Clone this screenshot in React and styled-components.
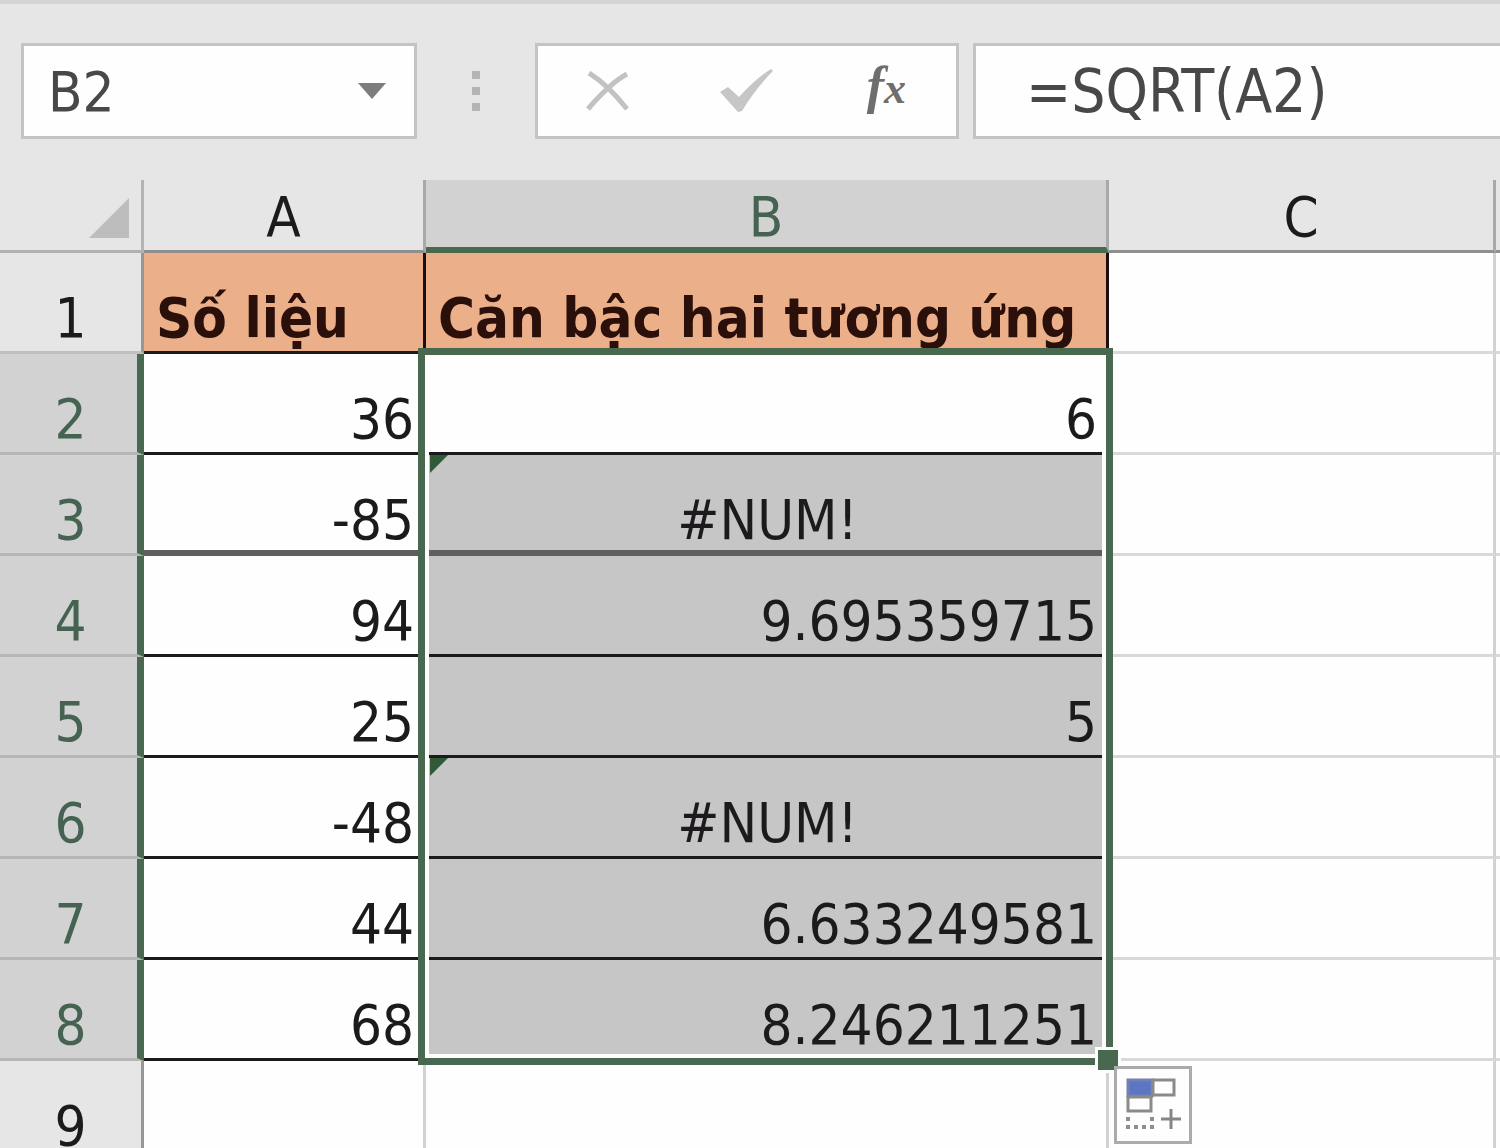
import React, { useState } from "react";
import styled, { createGlobalStyle } from "styled-components";

const GlobalStyle = createGlobalStyle`
  *, *::before, *::after { box-sizing: border-box; }
  body { margin: 0; }
  button, input { font: inherit; color: inherit; }
`;

const green = "#48684f";
const chrome = "#e6e6e6";

const Workbook = styled.main`
  display: flex;
  flex-direction: column;
  height: 100vh;
  overflow: hidden;
  background: #fefefe;
  color: #1c1a1c;
  font-family: "DejaVu Sans Condensed", "Noto Sans", sans-serif;
  font-size: 56px;
  line-height: 66px;
`;

const FormulaBar = styled.header`
  display: flex;
  align-items: stretch;
  flex: none;
  padding: 39px 0 41px 21px;
  border-top: 4px solid #d4d4d4;
  background: ${chrome};
  color: #484848;
`;

const Box = styled.div`
  display: flex;
  align-items: center;
  height: 96px;
  width: ${(p) => p.$width || "auto"};
  flex: ${(p) => (p.$grow ? "1" : "none")};
  min-width: 0;
  border: 3px solid #c4c4c4;
  border-right-width: ${(p) => (p.$grow ? "0" : "3px")};
  background: #fefefe;
`;

const Field = styled.input`
  flex: 1;
  min-width: 0;
  height: 72px;
  padding: 0 0 0 ${(p) => p.$indent};
  border: 0;
  outline: 0;
  background: transparent;
`;

const FormulaField = styled(Field)`
  font-size: 60px;
`;

const IconButton = styled.button`
  display: flex;
  align-items: center;
  justify-content: center;
  flex: ${(p) => (p.$width ? "none" : "1")};
  width: ${(p) => p.$width || "auto"};
  height: 100%;
  padding: 0;
  border: 0;
  background: transparent;
`;

const Grip = styled.div`
  display: flex;
  flex-direction: column;
  align-items: center;
  justify-content: center;
  gap: 8px;
  width: 118px;
`;

const Dot = styled.span`
  width: 8px;
  height: 8px;
  background: #b4b4b4;
`;

const Spacer = styled.div`
  width: 14px;
`;

const Fx = styled.span`
  display: flex;
  align-items: baseline;
  padding-bottom: 8px;
  color: #6e6e6e;
  font-family: "Liberation Serif", serif;
  font-style: italic;
  font-weight: bold;
  font-size: 52px;
  line-height: 60px;
`;

const FxSmall = styled.span`
  font-size: 44px;
`;

const Sheet = styled.section`
  position: relative;
  flex: 1;
  min-height: 0;
  overflow: hidden;
`;

const Table = styled.table`
  width: 100%;
  table-layout: fixed;
  border-collapse: separate;
  border-spacing: 0;
`;

const Col = styled.col`
  width: ${(p) => p.$width || "auto"};
`;

const Corner = styled.td`
  height: 73px;
  padding: 0 12px 12px 0;
  border-right: 3px solid #b4b4b4;
  border-bottom: 3px solid #b0b0b0;
  background: ${chrome};
  text-align: right;
  vertical-align: bottom;
  line-height: 0;
`;

const ColumnHead = styled.th`
  height: 73px;
  padding: 0;
  border-right: 3px solid #a9a9a9;
  border-bottom: ${(p) => (p.$selected ? `6px solid ${green}` : "3px solid #8f8f8f")};
  background: ${(p) => (p.$selected ? "#d2d2d2" : chrome)};
  color: ${(p) => (p.$selected ? "#456350" : "inherit")};
  font-weight: normal;
  line-height: ${(p) => (p.$selected ? "60px" : "66px")};
  vertical-align: bottom;

  &:last-child { border-right: 0; }
`;

const RowHead = styled.th`
  height: 101px;
  padding: 0 0 0 ${(p) => (p.$selected ? "4px" : "0")};
  border-right: ${(p) => (p.$selected ? `7px solid ${green}` : "3px solid #979797")};
  border-bottom: 3px solid ${(p) => (p.$selected ? "#b6b6b6" : "#c0c0c0")};
  background: ${(p) => (p.$selected ? "#d2d2d2" : chrome)};
  color: ${(p) => (p.$selected ? "#456350" : "inherit")};
  font-weight: normal;
  vertical-align: bottom;
`;

const ruleFor = (p) => {
  if (p.$heavy) return "6px solid #5f5f5f";
  return p.$ruled ? "3px solid #1c1a1c" : "3px solid #d9d9d9";
};

const Cell = styled.td`
  position: relative;
  height: 101px;
  padding: 0 9px 0 12px;
  border-right: 3px solid ${(p) => (p.$title ? "#1a1010" : "#d2d2d2")};
  border-bottom: ${ruleFor};
  background: ${(p) => (p.$title ? "#ebb08a" : p.$shaded ? "#c6c6c6" : "#fefefe")};
  color: ${(p) => (p.$title ? "#2a0f0a" : "inherit")};
  font-weight: ${(p) => (p.$title ? "bold" : "normal")};
  line-height: ${(p) => (p.$heavy ? "60px" : "66px")};
  text-align: ${(p) => p.$align || "left"};
  vertical-align: bottom;
  white-space: nowrap;

  &:last-child { border-right: 0; }
`;

const ErrorMark = styled.span`
  position: absolute;
  top: 0;
  left: 4px;
  border-top: 18px solid #2f5a35;
  border-right: 18px solid transparent;
`;

const Selection = styled.div`
  position: absolute;
  top: 168px;
  left: 418px;
  width: 695px;
  height: 717px;
  border: 7px solid ${green};
  box-shadow: inset 0 0 0 4px #fefefe;
  pointer-events: none;
`;

const FillHandle = styled.span`
  position: absolute;
  right: -15px;
  bottom: -15px;
  width: 26px;
  height: 26px;
  border: 3px solid #fefefe;
  background: ${green};
`;

const FillOptions = styled.button`
  position: absolute;
  top: 886px;
  left: 1114px;
  width: 78px;
  height: 78px;
  padding: 0;
  border: 3px solid #ababab;
  background: #fefefe;
  line-height: 0;
`;

const rows = [
  { n: 2, value: "36", root: "6" },
  { n: 3, value: "-85", root: "#NUM!", heavy: true },
  { n: 4, value: "94", root: "9.695359715" },
  { n: 5, value: "25", root: "5" },
  { n: 6, value: "-48", root: "#NUM!" },
  { n: 7, value: "44", root: "6.633249581" },
  { n: 8, value: "68", root: "8.246211251" },
];

export default function App() {
  const [cellName, setCellName] = useState("B2");
  const [formula, setFormula] = useState("=SQRT(A2)");

  return (
    <Workbook>
      <GlobalStyle />
      <FormulaBar>
        <Box $width="396px">
          <Field
            aria-label="Name box"
            $indent="24px"
            value={cellName}
            onChange={(e) => setCellName(e.target.value)}
          />
          <IconButton $width="84px" aria-label="Show names">
            <svg width="28" height="16" viewBox="0 0 28 16">
              <path d="M0 0h28L14 16z" fill="#7d7d7d" />
            </svg>
          </IconButton>
        </Box>
        <Grip>
          <Dot />
          <Dot />
          <Dot />
        </Grip>
        <Box $width="424px">
          <IconButton aria-label="Cancel">
            <svg width="44" height="40" viewBox="0 0 44 40" fill="none" stroke="#c2c2c2" strokeWidth="5">
              <path d="M3 2C16 10 30 24 41 38M41 3C28 10 14 24 2 38" />
            </svg>
          </IconButton>
          <IconButton aria-label="Enter">
            <svg width="54" height="44" viewBox="0 0 54 44">
              <path d="M0 23l8-5 11 10C29 17 40 7 51 0l2 2C42 13 31 27 22 42l-4 1z" fill="#c6c6c6" />
            </svg>
          </IconButton>
          <IconButton aria-label="Insert function">
            <Fx>
              f<FxSmall>x</FxSmall>
            </Fx>
          </IconButton>
        </Box>
        <Spacer />
        <Box $grow>
          <FormulaField
            aria-label="Formula"
            $indent="50px"
            value={formula}
            onChange={(e) => setFormula(e.target.value)}
          />
        </Box>
      </FormulaBar>

      <Sheet>
        <Table>
          <colgroup>
            <Col $width="144px" />
            <Col $width="282px" />
            <Col $width="683px" />
            <Col $width="387px" />
            <Col />
          </colgroup>
          <thead>
            <tr>
              <Corner>
                <svg width="40" height="40" viewBox="0 0 40 40">
                  <path d="M40 0v40H0z" fill="#bdbdbd" />
                </svg>
              </Corner>
              <ColumnHead scope="col">A</ColumnHead>
              <ColumnHead scope="col" $selected>B</ColumnHead>
              <ColumnHead scope="col">C</ColumnHead>
              <ColumnHead scope="col" />
            </tr>
          </thead>
          <tbody>
            <tr>
              <RowHead scope="row">1</RowHead>
              <Cell $title $ruled>Số liệu</Cell>
              <Cell $title $ruled>Căn bậc hai tương ứng</Cell>
              <Cell />
              <Cell />
            </tr>
            {rows.map(({ n, value, root, heavy }) => {
              const isError = root.startsWith("#");
              return (
                <tr key={n}>
                  <RowHead scope="row" $selected>{n}</RowHead>
                  <Cell $ruled $heavy={heavy} $align="right">{value}</Cell>
                  <Cell $ruled $heavy={heavy} $shaded={n > 2} $align={isError ? "center" : "right"}>
                    {isError && <ErrorMark />}
                    {root}
                  </Cell>
                  <Cell />
                  <Cell />
                </tr>
              );
            })}
            <tr>
              <RowHead scope="row">9</RowHead>
              <Cell />
              <Cell />
              <Cell />
              <Cell />
            </tr>
          </tbody>
        </Table>
        <Selection>
          <FillHandle />
        </Selection>
        <FillOptions aria-label="Auto fill options">
          <svg width="72" height="72" viewBox="0 0 72 72" fill="none">
            <path d="M11 11h24v16H11z" fill="#5b76c4" stroke="#7380b0" strokeWidth="3" />
            <path d="M36 11h21v15H36zM11 28h23v14H11z" stroke="#8a8a8a" strokeWidth="3" />
            <path d="M9 50h4M33 50h4M9 58h4M17 58h4M25 58h4M33 58h4" stroke="#8f8f8f" strokeWidth="4" />
            <path d="M44 50h20M54 40v20" stroke="#858585" strokeWidth="3" />
          </svg>
        </FillOptions>
      </Sheet>
    </Workbook>
  );
}
